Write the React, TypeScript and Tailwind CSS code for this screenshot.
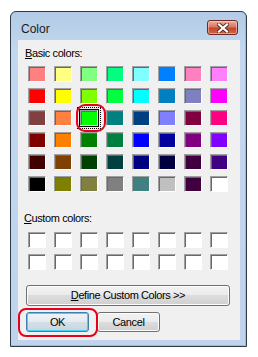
import React from 'react';

const basic: string[][] = [
  ['#ff8080', '#ffff80', '#80ff80', '#00ff80', '#80ffff', '#0080ff', '#ff80c0', '#ff80ff'],
  ['#ff0000', '#ffff00', '#80ff00', '#00ff40', '#00ffff', '#0080c0', '#8080c0', '#ff00ff'],
  ['#804040', '#ff8040', '#00ff00', '#008080', '#004080', '#8080ff', '#800040', '#ff0080'],
  ['#800000', '#ff8000', '#008000', '#008040', '#0000ff', '#0000a0', '#800080', '#8000ff'],
  ['#400000', '#804000', '#004000', '#004040', '#000080', '#000040', '#400040', '#400080'],
  ['#000000', '#808000', '#808040', '#808080', '#408080', '#c0c0c0', '#400040', '#ffffff'],
];

const Swatch: React.FC<{ color: string; selected?: boolean }> = ({ color, selected }) => (
  <div className="relative w-[18px] h-[16px]">
    <div
      className="w-full h-full border border-t-[#a0a0a0] border-l-[#a0a0a0] border-r-white border-b-white shadow-[inset_1px_1px_0_#696969]"
      style={{ backgroundColor: color }}
    />
    {selected && (
      <>
        <div className="absolute -inset-[1px] border border-black" />
        <div className="absolute -inset-[3px] border border-dotted border-black" />
      </>
    )}
  </div>
);

const btn =
  'h-full rounded-[3px] text-[11px] tracking-[-0.4px] text-black flex items-center justify-center bg-[linear-gradient(#f2f2f2,#ebebeb_50%,#dddddd_50%,#cfcfcf)]';

export default function App() {
  return (
    <div className="w-[258px] h-[357px] bg-white pt-[11px] pl-[10px] font-['Liberation_Sans',Arial,sans-serif]">
      <div className="relative w-[237px] h-[336px] border border-[#2e3a46] rounded-t-[6px] bg-[linear-gradient(#b3cbe6,#c3d8ef_40px,#bfd4ec)] shadow-[inset_-1px_-1px_0_#3fe3ff] flex flex-col">
        {/* title bar */}
        <div className="h-[28px] flex items-start justify-between pl-[10px] pr-[8px] pt-[8px]">
          <span className="mt-[2px] text-[12px] leading-[14px] text-[#1b1b1b]">Color</span>
          <div className="w-[31px] h-[15px] rounded-[3px] border border-[#6e2a22] bg-[linear-gradient(#eab0a3,#d77764_45%,#c5452e_55%,#d4643f)] shadow-[inset_0_0_0_1px_rgba(255,220,210,0.5)] flex items-center justify-center">
            <svg width="12" height="10" viewBox="0 0 12 10">
              <path d="M2 1.5 L10 8.5 M10 1.5 L2 8.5" stroke="#5a2a22" strokeWidth="4" strokeLinecap="square" />
              <path d="M2 1.5 L10 8.5 M10 1.5 L2 8.5" stroke="#ffffff" strokeWidth="2.2" strokeLinecap="square" />
            </svg>
          </div>
        </div>

        {/* client area */}
        <div className="ml-[7px] w-[222px] h-[300px] bg-[#f0f0f0] flex flex-col text-[11px] leading-[13px] tracking-[-0.4px] text-black">
          <div className="mt-[7px] pl-[7px]">
            <span className="underline">B</span>asic colors:
          </div>
          <div className="mt-[6px] ml-[10px] grid grid-cols-[repeat(8,18px)] gap-x-2 gap-y-[6px]">
            {basic.map((row, r) =>
              row.map((c, i) => <Swatch key={`${r}-${i}`} color={c} selected={r === 2 && i === 2} />)
            )}
          </div>
          <div className="mt-[20px] pl-[6px]">
            <span className="underline">C</span>ustom colors:
          </div>
          <div className="mt-[7px] ml-[10px] grid grid-cols-[repeat(8,18px)] gap-x-2 gap-y-[6px]">
            {Array.from({ length: 16 }).map((_, i) => (
              <Swatch key={i} color="#ffffff" />
            ))}
          </div>
          <div className="mt-[15px] ml-[8px] w-[204px] h-[21px]">
            <div className={`${btn} border border-[#707070] shadow-[inset_0_0_0_1px_#fcfcfc]`}>
              <span>
                <span className="underline">D</span>efine Custom Colors &gt;&gt;
              </span>
            </div>
          </div>
          <div className="mt-[6px] ml-[8px] h-[20px] flex gap-[8px]">
            <div className="w-[63px] h-full">
              <div className="h-full rounded-[3px] text-[11px] tracking-[-0.4px] text-black flex items-center justify-center border border-[#3c7fb1] shadow-[inset_0_0_0_1px_#48d1f7] bg-[linear-gradient(#eef3f6,#e4ebf0_50%,#d5dfe6_50%,#c9d5de)]">
                OK
              </div>
            </div>
            <div className="w-[63px] h-full">
              <div className={`${btn} border border-[#707070] shadow-[inset_0_0_0_1px_#fcfcfc]`}>Cancel</div>
            </div>
          </div>
        </div>

        {/* red annotation rings */}
        <div className="absolute left-[65px] top-[92px] w-[30px] h-[28px] rounded-[9px] border-2 border-[#e6001c]" />
        <div className="absolute left-[7px] top-[296px] w-[80px] h-[29px] rounded-[8px] border-2 border-[#e6001c]" />
      </div>
    </div>
  );
}
